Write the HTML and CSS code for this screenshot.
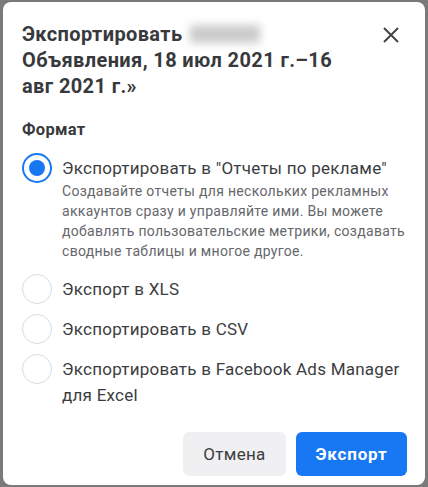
FILE: index.html
```html
<!DOCTYPE html>
<html lang="ru">
<head>
<meta charset="utf-8">
<link rel="stylesheet" href="styles.css">
</head>
<body>
<div class="dialog">
  <header class="head">
    <h1 class="title">Экспортировать <span class="blur"></span><br>Объявления, 18 июл 2021 г.–16<br>авг 2021 г.»</h1>
    <button class="close" aria-label="Закрыть">
      <svg width="16" height="16" viewBox="0 0 16 16"><path d="M1 1 L15 15 M15 1 L1 15" stroke="#444" stroke-width="2" fill="none"/></svg>
    </button>
  </header>
  <section class="body">
    <div class="section-label">Формат</div>
    <div class="options">
      <label class="option option-first">
        <span class="radio checked"><span class="dot"></span></span>
        <span class="text">
          <span class="name">Экспортировать в "Отчеты по рекламе"</span>
          <span class="desc">Создавайте отчеты для нескольких рекламных аккаунтов сразу и управляйте ими. Вы можете добавлять пользовательские метрики, создавать сводные таблицы и многое другое.</span>
        </span>
      </label>
      <label class="option">
        <span class="radio"></span>
        <span class="text"><span class="name">Экспорт в XLS</span></span>
      </label>
      <label class="option">
        <span class="radio"></span>
        <span class="text"><span class="name">Экспортировать в CSV</span></span>
      </label>
      <label class="option">
        <span class="radio"></span>
        <span class="text"><span class="name">Экспортировать в Facebook Ads Manager для Excel</span></span>
      </label>
    </div>
  </section>
  <footer class="foot">
    <button class="btn btn-secondary">Отмена</button>
    <button class="btn btn-primary">Экспорт</button>
  </footer>
</div>
</body>
</html>
```
FILE: styles.css
```css
html, body {
  margin: 0;
  padding: 0;
}
body {
  background: #7a7a7a;
  font-family: Roboto, "Liberation Sans", sans-serif;
  color: #1c1e21;
  width: 428px;
  height: 487px;
  overflow: hidden;
}
.dialog {
  box-sizing: border-box;
  margin: 2px 0 0 3px;
  width: 422px;
  height: 483px;
  background: #fff;
  border-radius: 8px;
  padding: 19px 18px 9px 19px;
  display: flex;
  flex-direction: column;
}
.head {
  display: flex;
  align-items: flex-start;
  justify-content: space-between;
}
.title {
  margin: 0;
  font-size: 20px;
  line-height: 26px;
  font-weight: 700;
  letter-spacing: 0.38px;
  color: #38393c;
}
.blur {
  display: inline-block;
  width: 70px;
  height: 18px;
  vertical-align: -2px;
  background: #cbcbcb;
  filter: blur(4px);
  margin-left: 2px;
}
.close {
  border: 0;
  background: none;
  padding: 0;
  margin: 6px 8px 0 0;
  width: 16px;
  height: 16px;
  display: flex;
}
.body {
  margin-top: 21px;
}
.section-label {
  font-size: 16.5px;
  line-height: 20px;
  font-weight: 700;
  letter-spacing: 0.3px;
  color: #38393c;
}
.options {
  margin-top: 13px;
  display: flex;
  flex-direction: column;
  gap: 10px;
}
.option {
  display: flex;
  align-items: flex-start;
  gap: 10px;
}
.option-first {
  margin-bottom: 3px;
}
.radio {
  box-sizing: border-box;
  flex: none;
  width: 30px;
  height: 30px;
  border-radius: 50%;
  border: 1px solid #d9dbde;
  display: flex;
  align-items: center;
  justify-content: center;
}
.radio.checked {
  border: 2px solid #1877f2;
}
.dot {
  width: 16px;
  height: 16px;
  border-radius: 50%;
  background: #1877f2;
}
.text {
  padding-top: 2px;
  display: flex;
  flex-direction: column;
}
.name {
  font-size: 17px;
  line-height: 26px;
  letter-spacing: 0.25px;
  color: #3c3d40;
}
.desc {
  font-size: 14px;
  line-height: 20px;
  letter-spacing: 0.3px;
  color: #65676b;
}
.foot {
  margin-top: auto;
  display: flex;
  justify-content: flex-end;
  gap: 10px;
}
.btn {
  height: 44px;
  border: 0;
  border-radius: 6px;
  font-family: Roboto, "Liberation Sans", sans-serif;
  font-size: 17px;
}
.btn-secondary {
  width: 103px;
  background: #f0f0f2;
  color: #3c3d40;
  letter-spacing: 0.3px;
}
.btn-primary {
  width: 111px;
  background: #1877f2;
  color: #fff;
  font-weight: 700;
  letter-spacing: 0.8px;
}
```
